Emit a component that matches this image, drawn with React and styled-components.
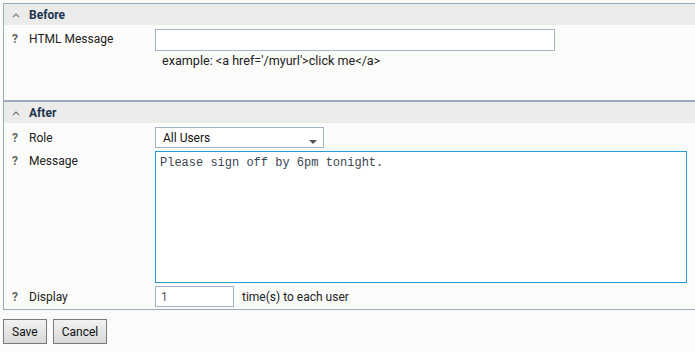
import React from 'react';
import styled, { createGlobalStyle } from 'styled-components';

const GlobalStyle = createGlobalStyle`
  body {
    margin: 0;
    background: #fbfcfa;
    font-family: Roboto, 'Liberation Sans', Arial, sans-serif;
    font-size: 12px;
    color: #222;
  }
`;

const Page = styled.div`
  padding: 3px 0 0 3px;
  overflow: hidden;
`;

const Panel = styled.div`
  border-top: 1px solid #9aabbd;
  border-left: 1px solid #9aabbd;
  border-bottom: 1px solid #9aabbd;
  background: #fbfcfa;
`;

const Section = styled.div`
  border-top: ${(p) => (p.$divided ? '2px solid #9aabbd' : 'none')};
`;

const Header = styled.div`
  display: flex;
  align-items: center;
  height: 21px;
  padding-left: 8px;
  background: #ebecea;
  font-weight: bold;
  color: #1d3550;
  font-size: 12px;
`;

const Chevron = styled.svg`
  width: 8px;
  height: 6px;
  margin-right: 9px;
`;

const Body = styled.div`
  display: flex;
  flex-direction: column;
  gap: 3px;
  padding-top: 4px;
  min-height: ${(p) => p.$min || 0}px;
  padding-bottom: ${(p) => p.$bottom || 0}px;
  box-sizing: border-box;
`;

const Row = styled.div`
  display: grid;
  grid-template-columns: 151px 1fr;
  align-items: ${(p) => (p.$top ? 'start' : 'center')};
`;

const Label = styled.div`
  display: flex;
  align-items: center;
  padding-left: 8px;
  height: 20px;
  font-size: 12px;
  color: #222;
`;

const Help = styled.span`
  width: 17px;
  font-weight: bold;
  color: #666;
`;

const Field = styled.div`
  display: flex;
  flex-direction: column;
`;

const Inline = styled.div`
  display: flex;
  align-items: center;
  gap: 8px;
`;

const TextInput = styled.input`
  box-sizing: border-box;
  width: ${(p) => p.$w}px;
  height: ${(p) => p.$h || 22}px;
  border: 1px solid #a3b3c6;
  background: #fff;
  padding: 0 5px;
  font-family: Roboto, 'Liberation Sans', Arial, sans-serif;
  font-size: 12px;
  color: #556;
  outline: none;
`;

const Hint = styled.div`
  padding: 2px 0 0 7px;
  font-size: 12.6px;
  color: #222;
`;

const Select = styled.div`
  position: relative;
  box-sizing: border-box;
  width: 169px;
  height: 21px;
  border: 1px solid #a3b3c6;
  background: #fff;
  padding-left: 7px;
  display: flex;
  align-items: center;
  font-size: 12px;
  color: #111;
`;

const Caret = styled.span`
  position: absolute;
  right: 6px;
  top: 12px;
  width: 0;
  height: 0;
  border-left: 4px solid transparent;
  border-right: 4px solid transparent;
  border-top: 4px solid #555;
`;

const TextArea = styled.textarea`
  box-sizing: border-box;
  width: 532px;
  height: 132px;
  border: 1px solid #2a9ad6;
  background: #fff;
  padding: 4px 4px;
  resize: none;
  font-family: 'Liberation Mono', 'Courier New', monospace;
  font-size: 12px;
  color: #3a4656;
  outline: none;
  display: block;
`;

const Note = styled.span`
  font-size: 12px;
  color: #222;
`;

const Buttons = styled.div`
  display: flex;
  gap: 6px;
  padding-top: 9px;
`;

const Button = styled.button`
  height: 25px;
  padding: 0 8px;
  border: 1px solid #7a7a7a;
  background: linear-gradient(#f2f2f2, #d9d9d9);
  font-family: Roboto, 'Liberation Sans', Arial, sans-serif;
  font-size: 12px;
  color: #111;
`;

const Up = () => (
  <Chevron viewBox="0 0 8 6">
    <path d="M1 5 L4 2 L7 5" fill="none" stroke="#777" strokeWidth="1.1" />
  </Chevron>
);

export default function App() {
  return (
    <Page>
      <GlobalStyle />
      <Panel>
        <Section>
          <Header>
            <Up />
            Before
          </Header>
          <Body $min={75}>
            <Row $top>
              <Label>
                <Help>?</Help>HTML Message
              </Label>
              <Field>
                <TextInput $w={400} defaultValue="" />
                <Hint>example: &lt;a href='/myurl'&gt;click me&lt;/a&gt;</Hint>
              </Field>
            </Row>
          </Body>
        </Section>
        <Section $divided>
          <Header>
            <Up />
            After
          </Header>
          <Body $bottom={2}>
            <Row>
              <Label>
                <Help>?</Help>Role
              </Label>
              <Select>
                All Users
                <Caret />
              </Select>
            </Row>
            <Row $top>
              <Label>
                <Help>?</Help>Message
              </Label>
              <TextArea defaultValue="Please sign off by 6pm tonight." />
            </Row>
            <Row>
              <Label>
                <Help>?</Help>Display
              </Label>
              <Inline>
                <TextInput $w={79} $h={21} defaultValue="1" />
                <Note>time(s) to each user</Note>
              </Inline>
            </Row>
          </Body>
        </Section>
      </Panel>
      <Buttons>
        <Button>Save</Button>
        <Button>Cancel</Button>
      </Buttons>
    </Page>
  );
}
